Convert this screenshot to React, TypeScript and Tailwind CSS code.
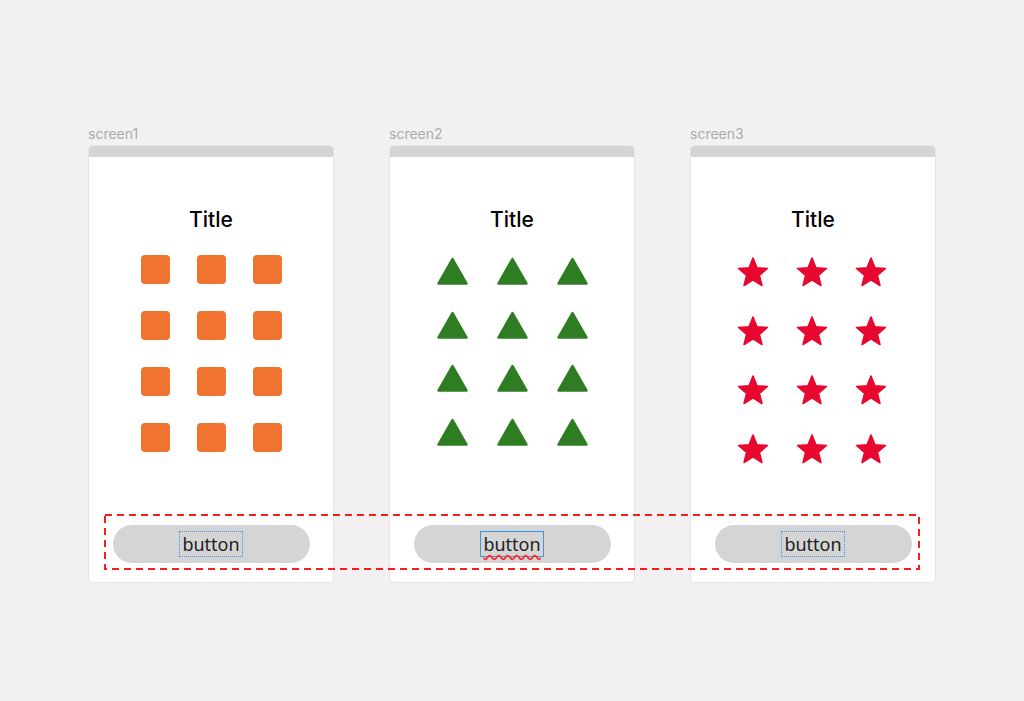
import React from "react";

const font = { fontFamily: '"Noto Sans", Lato, sans-serif' };
const inter = { fontFamily: 'Inter, "Noto Sans", sans-serif' };

// rounded five-point star, box 32x30
function starPath() {
  const cx = 16;
  const cy = 16.2;
  const R = 15.2;
  const r = R * 0.44;
  const pts: string[] = [];
  for (let i = 0; i < 10; i++) {
    const rad = i % 2 === 0 ? R : r;
    const a = (Math.PI / 5) * i - Math.PI / 2;
    pts.push(`${(cx + rad * Math.cos(a)).toFixed(2)},${(cy + rad * Math.sin(a)).toFixed(2)}`);
  }
  return "M" + pts.join("L") + "Z";
}
const STAR = starPath();

function Square() {
  return <div className="h-[29px] w-[29px] rounded-[4px] bg-[#f07330]" />;
}

function Triangle() {
  return (
    <svg width="31" height="28" viewBox="0 0 31 28">
      <path
        d="M15.5 2 L29.5 26.5 L1.5 26.5 Z"
        fill="#2f7d23"
        stroke="#2f7d23"
        strokeWidth="2.5"
        strokeLinejoin="round"
      />
    </svg>
  );
}

function Star() {
  return (
    <svg width="32" height="30" viewBox="0 0 32 30">
      <path d={STAR} fill="#e8082f" stroke="#e8082f" strokeWidth="1.6" strokeLinejoin="round" />
    </svg>
  );
}

type Kind = "square" | "triangle" | "star";

const screens: { label: string; kind: Kind; box: "dotted" | "solid" }[] = [
  { label: "screen1", kind: "square", box: "dotted" },
  { label: "screen2", kind: "triangle", box: "solid" },
  { label: "screen3", kind: "star", box: "dotted" },
];

function Shapes({ kind }: { kind: Kind }) {
  const items = Array.from({ length: 12 });
  if (kind === "square")
    return (
      <div className="mt-[21px] grid grid-cols-[repeat(3,29px)] justify-center gap-x-[27px] gap-y-[27px]">
        {items.map((_, i) => (
          <Square key={i} />
        ))}
      </div>
    );
  if (kind === "triangle")
    return (
      <div className="mt-[23px] grid grid-cols-[repeat(3,31px)] justify-center gap-x-[29px] gap-y-[25.7px]">
        {items.map((_, i) => (
          <Triangle key={i} />
        ))}
      </div>
    );
  return (
    <div className="mt-[23px] grid grid-cols-[repeat(3,32px)] justify-center gap-x-[27px] gap-y-[29px] pr-[3px]">
      {items.map((_, i) => (
        <Star key={i} />
      ))}
    </div>
  );
}

function Screen({ label, kind, box }: (typeof screens)[number]) {
  return (
    <div className="flex flex-col">
      <div className="mb-[2px] h-[18px] text-[14px] leading-[18px] text-[#adabab]" style={inter}>
        {label}
      </div>
      <div className="flex h-[438px] w-[246px] flex-col overflow-hidden rounded-[5px] border border-[#e6e4e4] bg-white">
        <div className="h-[11px] shrink-0 bg-[#d5d5d5]" />
        <div
          className="mt-[49px] text-center text-[21px] font-medium leading-[28px] text-black"
          style={inter}
        >
          Title
        </div>
        <Shapes kind={kind} />
        <div className="flex-1" />
        <div className="mx-auto mb-[19px] flex h-[38px] w-[197px] items-center justify-center rounded-full bg-[#d5d5d5]">
          <span
            className={
              box === "solid"
                ? "border border-solid border-[#3a97e6] px-[2px] text-[18px] leading-[24px] text-[#222] underline decoration-[#ff2a2a] decoration-wavy underline-offset-[3px]"
                : "border border-dotted border-[#3a97e6] px-[2px] text-[18px] leading-[24px] text-[#222]"
            }
            style={font}
          >
            button
          </span>
        </div>
      </div>
    </div>
  );
}

export default function App() {
  return (
    <div className="relative h-[701px] w-full overflow-hidden bg-[#f2f0f0]">
      <div className="flex gap-[55px] pl-[88px] pt-[125px]">
        {screens.map((s) => (
          <Screen key={s.label} {...s} />
        ))}
      </div>
      {/* selection annotation across the three buttons */}
      <svg className="absolute left-[104px] top-[514px]" width="816" height="56" viewBox="0 0 816 56">
        <rect
          x="1"
          y="1"
          width="814"
          height="54"
          fill="none"
          stroke="#ff1a1a"
          strokeWidth="2"
          strokeDasharray="7 5"
        />
      </svg>
    </div>
  );
}
